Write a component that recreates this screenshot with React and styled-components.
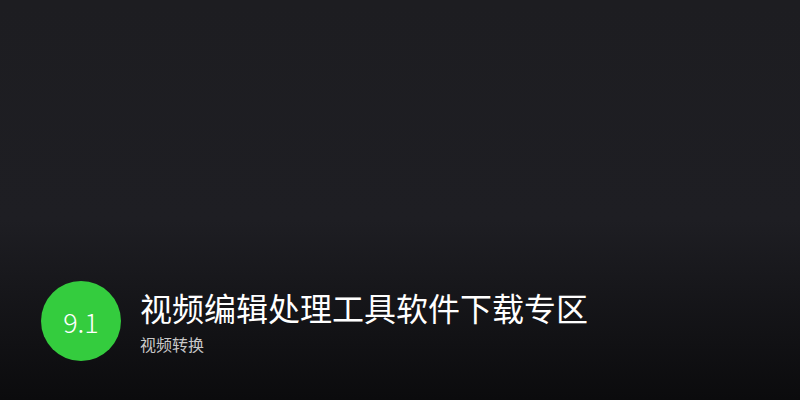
import React from 'react';
import styled, { createGlobalStyle } from 'styled-components';

const GlobalStyle = createGlobalStyle`
  html, body {
    margin: 0;
    padding: 0;
    height: 100%;
  }
  #root {
    height: 100%;
  }
  body {
    font-family: "Noto Sans CJK SC", "Noto Sans", sans-serif;
  }
`;

const Banner = styled.div`
  width: 800px;
  height: 400px;
  box-sizing: border-box;
  display: flex;
  flex-direction: column;
  justify-content: flex-end;
  padding: 0 0 39px 41px;
  background: linear-gradient(180deg, #1d1d21 0%, #1e1e23 55%, #0b0b0d 100%);
`;

const Row = styled.div`
  display: flex;
  align-items: center;
  gap: 19px;
`;

const Score = styled.div`
  width: 80px;
  height: 80px;
  border-radius: 50%;
  background: #34cc3e;
  color: #fff;
  display: flex;
  align-items: center;
  justify-content: center;
  font-size: 27px;
  font-weight: 300;
  flex-shrink: 0;
`;

const Info = styled.div`
  display: flex;
  flex-direction: column;
  gap: 13px;
`;

const Title = styled.h1`
  margin: 0;
  color: #fff;
  font-size: 32px;
  font-weight: 400;
  line-height: 32px;
`;

const Tag = styled.span`
  color: #c8c8c8;
  font-size: 16px;
  line-height: 16px;
`;

export default function App() {
  return (
    <>
      <GlobalStyle />
      <Banner>
        <Row>
          <Score>9.1</Score>
          <Info>
            <Title>视频编辑处理工具软件下载专区</Title>
            <Tag>视频转换</Tag>
          </Info>
        </Row>
      </Banner>
    </>
  );
}
